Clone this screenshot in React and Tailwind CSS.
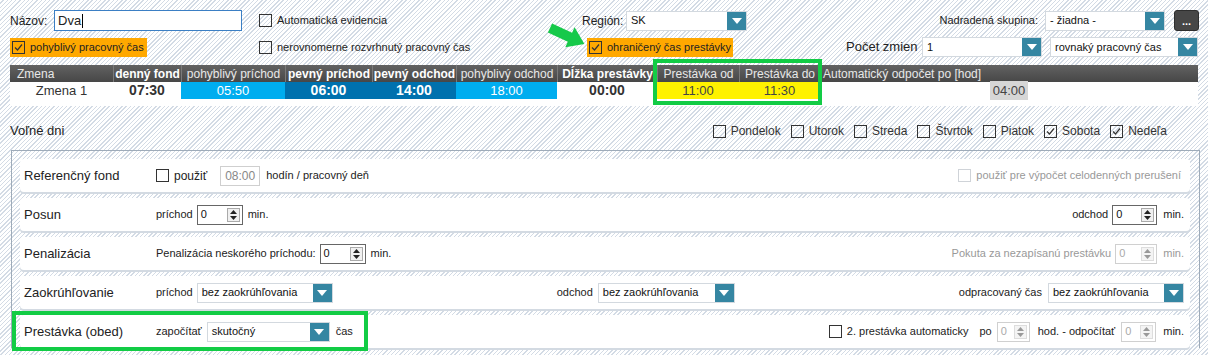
import React from "react";

const ari = "font-['Liberation_Sans',Arial,sans-serif]";

function Box({ checked, disabled }) {
    return (
        <span
            className={`inline-flex h-[13px] w-[13px] shrink-0 items-center justify-center border ${
                disabled ? "border-[#cfd3d8] bg-white" : "border-[#333]"
            }`}
        >
            {checked && (
                <svg width="9" height="9" viewBox="0 0 9 9">
                    <path d="M1 4.5 L3.5 7 L8 1.5" fill="none" stroke="#333" strokeWidth="1.2" />
                </svg>
            )}
        </span>
    );
}

function Select({ value, className = "" }) {
    return (
        <div className={`flex h-[20px] items-stretch border border-[#d3d9df] bg-white ${className}`}>
            <span className="flex flex-1 items-center truncate pl-[4px] text-[#111]">{value}</span>
            <span className="flex w-[19px] items-center justify-center bg-[#3586a2]">
                <svg width="10" height="6" viewBox="0 0 10 6">
                    <path d="M0 0H10L5 6Z" fill="#fff" />
                </svg>
            </span>
        </div>
    );
}

function Spin({ className = "", disabled }) {
    return (
        <div
            className={`flex h-[20px] items-stretch border bg-white ${
                disabled ? "border-[#d0d0d0] text-[#aaa]" : "border-[#666] text-[#111]"
            } ${className}`}
        >
            <span className="flex flex-1 items-center pl-[3px]">0</span>
            <span
                className={`my-[2px] mr-[2px] flex w-[13px] flex-col items-center justify-center gap-[2px] border ${
                    disabled ? "border-[#ddd] bg-[#f4f4f4]" : "border-[#aaa] bg-[#f0f0f0]"
                }`}
            >
                <svg width="7" height="4" viewBox="0 0 7 4">
                    <path d="M0 4H7L3.5 0Z" fill={disabled ? "#999" : "#222"} />
                </svg>
                <svg width="7" height="4" viewBox="0 0 7 4">
                    <path d="M0 0H7L3.5 4Z" fill={disabled ? "#999" : "#222"} />
                </svg>
            </span>
        </div>
    );
}

function Card({ label, children }) {
    return (
        <div className="flex h-[33px] items-center whitespace-nowrap rounded-[4px] bg-white px-[4px] text-[11px] text-[#222] shadow-[0_2px_0_#d3dae2]">
            <span className="w-[132px] shrink-0 text-[13px]">{label}</span>
            {children}
        </div>
    );
}

export default function App() {
    const cols = [
        { h: "Zmena", w: "w-[103px]", cls: "justify-start pl-[7px]" },
        { h: "denný fond", w: "w-[68px]", bold: true },
        { h: "pohyblivý príchod", w: "w-[104px]" },
        { h: "pevný príchod", w: "w-[87px]", bold: true },
        { h: "pevný odchod", w: "w-[84px]", bold: true },
        { h: "pohyblivý odchod", w: "w-[101px]" },
        { h: "Dĺžka prestávky", w: "w-[100px]", bold: true },
        { h: "Prestávka od", w: "w-[82px]" },
        { h: "Prestávka do", w: "w-[81px]" },
        { h: "Automatický odpočet po [hod]", w: "flex-1", cls: "justify-start pl-[2px]" }
    ];

    const days = [
        ["Pondelok", false],
        ["Utorok", false],
        ["Streda", false],
        ["Štvrtok", false],
        ["Piatok", false],
        ["Sobota", true],
        ["Nedeľa", true]
    ];

    return (
        <div className={`relative h-[355px] w-[1208px] overflow-hidden whitespace-nowrap bg-[repeating-linear-gradient(135deg,#ffffff_0px,#ffffff_2px,#d3dbe5_2px,#d3dbe5_3px)] ${ari}`}>

            {/* TOP ROW */}
            <div className="mt-[10px] flex h-[21px] items-center pl-[10px] pr-[9px] text-[11px] text-[#222]">
                <span className="w-[44px] text-[12px]">Názov:</span>
                <div className="flex h-[21px] w-[188px] items-center border border-[#3b7fc4] bg-white px-[3px] text-[13px]">
                    Dva<span className="ml-[1px] h-[14px] w-[1px] bg-black" />
                </div>
                <label className="ml-[17px] flex w-[323px] items-center gap-[5px]">
                    <Box />
                    Automatická evidencia
                </label>
                <span className="w-[44px] text-[12px]">Región:</span>
                <Select value="SK" className="w-[121px]" />
                <div className="ml-auto flex items-center">
                    <span className="mr-[7px]">Nadradená skupina:</span>
                    <Select value="- žiadna -" className="w-[120px]" />
                    <button className="ml-[9px] flex h-[21px] w-[25px] items-end justify-center rounded-[3px] border border-[#2e2e2e] bg-[#474747] pb-[3px] text-[11px] font-bold leading-none text-white">
                        ...
                    </button>
                </div>
            </div>

            {/* SECOND ROW */}
            <div className="mt-[6px] flex h-[20px] items-center pl-[10px] text-[11px] text-[#222]">
                <label className="flex h-[19px] w-[137px] items-center gap-[5px] bg-[#ffa800] pl-[2px]">
                    <Box checked />
                    pohyblivý pracovný čas
                </label>
                <label className="ml-[112px] flex w-[328px] items-center gap-[5px]">
                    <Box />
                    nerovnomerne rozvrhnutý pracovný čas
                </label>
                <label className="flex h-[19px] w-[146px] items-center gap-[5px] bg-[#ffa800] pl-[2px]">
                    <Box checked />
                    ohraničený čas prestávky
                </label>
                <span className="ml-[113px] w-[76px] text-[13px]">Počet zmien</span>
                <Select value="1" className="w-[120px]" />
                <Select value="rovnaký pracovný čas" className="ml-[8px] w-[148px]" />
            </div>

            {/* SHIFT TABLE */}
            <div className="mx-[10px] mt-[8px]">
                <div className="flex h-[17px] bg-linear-to-b from-[#626262] to-[#474747] text-[12px]">
                    {cols.map((c, i) => (
                        <div
                            key={c.h}
                            className={`flex items-center overflow-hidden ${c.w} ${c.cls || "justify-center"} ${
                                i > 0 ? "border-l border-[#7a7a7a]" : ""
                            } ${c.bold ? "font-bold text-white" : "text-[#e8e8e8]"}`}
                        >
                            {c.h}
                        </div>
                    ))}
                </div>
                <div className="flex h-[24px] items-start bg-white text-[13px]">
                    <div className="flex h-[17px] w-[103px] items-center justify-center text-[#333]">Zmena 1</div>
                    <div className="flex h-[17px] w-[68px] items-center justify-center text-[14px] font-bold text-[#333]">07:30</div>
                    <div className="flex h-[17px] w-[104px] items-center justify-center bg-[#00adef] text-white">05:50</div>
                    <div className="flex h-[17px] w-[87px] items-center justify-center bg-[#0071ae] text-[14px] font-bold text-white">06:00</div>
                    <div className="flex h-[17px] w-[84px] items-center justify-center bg-[#0071ae] text-[14px] font-bold text-white">14:00</div>
                    <div className="flex h-[17px] w-[101px] items-center justify-center bg-[#00adef] text-white">18:00</div>
                    <div className="flex h-[17px] w-[100px] items-center justify-center text-[14px] font-bold text-[#333]">00:00</div>
                    <div className="flex h-[17px] w-[82px] items-center justify-center bg-[#fff200] text-[#444]">11:00</div>
                    <div className="flex h-[17px] w-[81px] items-center justify-center bg-[#fff200] text-[#444]">11:30</div>
                    <div className="flex h-[17px] flex-1 items-center justify-center">
                        <span className="bg-[#d6d6d6] px-[3px] text-[#444]">04:00</span>
                    </div>
                </div>
            </div>

            {/* FREE DAYS */}
            <div className="mt-[16px] flex h-[18px] items-center pl-[10px] pr-[41px] text-[#222]">
                <span className="text-[13px]">Voľné dni</span>
                <div className="ml-auto flex items-center gap-[10px] text-[12px] text-[#333]">
                    {days.map(([d, c]) => (
                        <label key={d} className="flex items-center gap-[5px]">
                            <Box checked={c} />
                            {d}
                        </label>
                    ))}
                </div>
            </div>

            {/* SETTINGS PANEL */}
            <div className="ml-[11px] mt-[10px] flex w-[1189px] flex-col gap-[6px] border-l border-t border-r border-[#9eabb9] pl-[8px] pr-[9px] pt-[8px]">

                <Card label="Referenčný fond">
                    <label className="flex items-center gap-[5px] text-[12px]">
                        <Box />
                        použiť
                    </label>
                    <span className="ml-[13px] flex h-[20px] w-[40px] items-center justify-center border border-[#cfcfcf] bg-white text-[12px] text-[#888]">
                        08:00
                    </span>
                    <span className="ml-[6px] text-[11px]">hodín / pracovný deň</span>
                    <label className="ml-auto mr-[5px] flex items-center gap-[5px] text-[#999]">
                        <Box disabled />
                        použiť pre výpočet celodenných prerušení
                    </label>
                </Card>

                <Card label="Posun">
                    <span>príchod</span>
                    <Spin className="ml-[4px] w-[46px]" />
                    <span className="ml-[5px]">min.</span>
                    <span className="ml-auto">odchod</span>
                    <Spin className="ml-[4px] w-[45px]" />
                    <span className="ml-[6px] mr-[2px]">min.</span>
                </Card>

                <Card label="Penalizácia">
                    <span>Penalizácia neskorého príchodu:</span>
                    <Spin className="ml-[4px] w-[46px]" />
                    <span className="ml-[5px]">min.</span>
                    <span className="ml-auto text-[#999]">Pokuta za nezapísanú prestávku</span>
                    <Spin className="ml-[4px] w-[42px]" disabled />
                    <span className="ml-[6px] mr-[2px] text-[#999]">min.</span>
                </Card>

                <Card label="Zaokrúhľovanie">
                    <span>príchod</span>
                    <Select value="bez zaokrúhľovania" className="ml-[4px] w-[136px]" />
                    <span className="ml-[224px]">odchod</span>
                    <Select value="bez zaokrúhľovania" className="ml-[5px] w-[137px]" />
                    <span className="ml-auto">odpracovaný čas</span>
                    <Select value="bez zaokrúhľovania" className="ml-[6px] mr-[2px] w-[136px]" />
                </Card>

                <Card label="Prestávka (obed)">
                    <span>započítať</span>
                    <Select value="skutočný" className="ml-[5px] w-[123px]" />
                    <span className="ml-[6px]">čas</span>
                    <label className="ml-auto flex items-center gap-[5px]">
                        <Box />
                        2. prestávka automaticky
                    </label>
                    <span className="ml-[11px]">po</span>
                    <Spin className="ml-[5px] w-[33px]" disabled />
                    <span className="ml-[8px]">hod. - odpočítať</span>
                    <Spin className="ml-[6px] w-[35px]" disabled />
                    <span className="ml-[7px] mr-[2px]">min.</span>
                </Card>
            </div>

            {/* ANNOTATIONS */}
            <svg className="absolute left-[547px] top-[22px]" width="45" height="30" viewBox="0 0 45 30">
                <g transform="translate(3,6) rotate(25)">
                    <polygon points="0,-5 22,-5 22,-11 38,0 22,11 22,5 0,5" fill="#16c94a" />
                </g>
            </svg>
            <div className="absolute left-[653px] top-[59px] h-[46px] w-[169px] border-4 border-[#12cc45]" />
            <div className="absolute left-[12px] top-[311px] h-[40px] w-[356px] border-4 border-[#12cc45]" />
        </div>
    );
}
